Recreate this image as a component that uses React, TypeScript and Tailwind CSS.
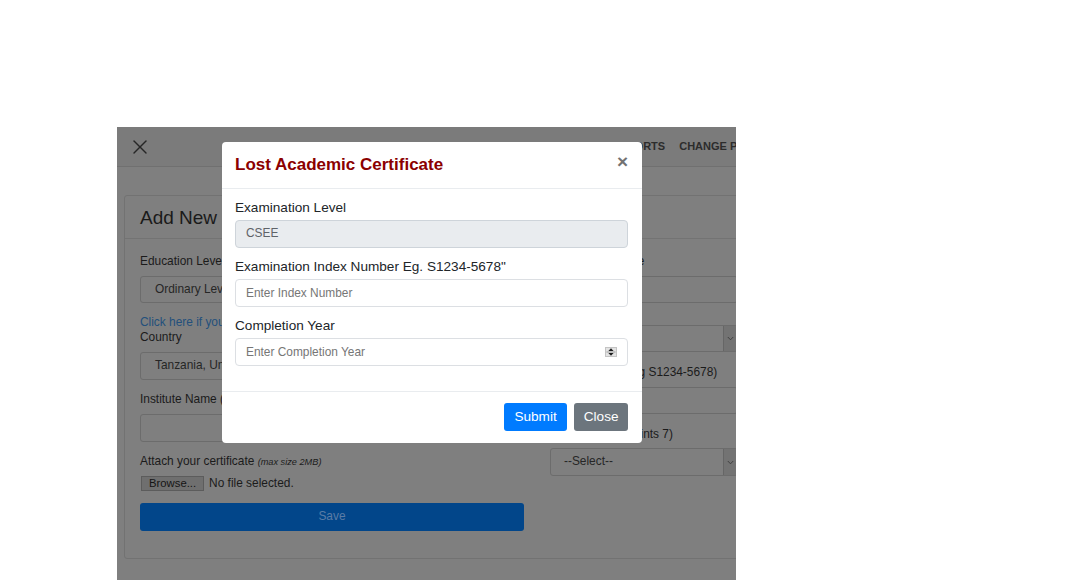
import React from "react";
import { X } from "lucide-react";

const bgLabel = "block leading-[15px] text-[#1b1b1b]";
const bgInput = "border border-[#6c6c6c] rounded-[3px] flex items-center";

function BgSelect({ text, h, className = "" }: { text: string; h: string; className?: string }) {
  return (
    <div className={`${bgInput} ${h} ${className} w-[188px] pl-[13px] justify-between overflow-hidden`}>
      <span className="text-[#262626]">{text}</span>
      <div className="w-[14px] h-full bg-[#737373] border-l border-[#666] flex items-center justify-center shrink-0">
        <svg width="7" height="5" viewBox="0 0 7 5">
          <path d="M0.8 1 L3.5 3.8 L6.2 1" stroke="#3a3a3a" strokeWidth="0.9" fill="none" />
        </svg>
      </div>
    </div>
  );
}

function Spinner() {
  return (
    <svg width="12" height="10" viewBox="0 0 12 10" className="shrink-0">
      <rect x="0" y="0" width="12" height="10" fill="#e3e3e3" />
      <rect x="0.5" y="0.5" width="11" height="9" fill="none" stroke="#c4c4c4" />
      <path d="M6 1.3 L8.6 4 L3.4 4 Z" fill="#1e1e1e" />
      <path d="M1.5 5 L10.5 5" stroke="#8a8a8a" strokeWidth="0.8" />
      <path d="M3.4 6 L8.6 6 L6 8.7 Z" fill="#1e1e1e" />
    </svg>
  );
}

export default function App() {
  return (
    <div className="w-[1080px] h-[580px] bg-white overflow-hidden font-['Liberation_Sans',Arial,sans-serif]">
      <div className="pt-[127px] pl-[117px]">
        <div className="relative w-[619px] h-[453px] overflow-hidden bg-[#7f7f7f] text-[11.9px]">
          {/* top bar */}
          <div className="flex items-center h-[39px] bg-[#7b7b7b] border-b border-[#707070] box-content">
            <div className="pl-[11px] w-[495px] shrink-0">
              <X size={24} strokeWidth={1.4} color="#262626" />
            </div>
            <nav className="flex gap-[14px] shrink-0 whitespace-nowrap text-[11px] font-bold text-[#2c2c2c]">
              <span>REPORTS</span>
              <span>CHANGE PASSWORD</span>
            </nav>
          </div>

          {/* card */}
          <div className="ml-[7px] mt-[28px] w-[820px] border border-[#727272] rounded-[3px]">
            <div className="h-[43px] px-[15px] flex items-center border-b border-[#737373]">
              <h4 className="text-[19px] text-[#1a1a1a] leading-none">Add New Certificate</h4>
            </div>
            <div className="pl-[15px] pt-[15px] pb-[27px] flex gap-[26px]">
              {/* left column */}
              <div className="w-[384px] shrink-0">
                <label className={`${bgLabel} mb-[7px]`}>Education Level</label>
                <div className={`${bgInput} h-[27px] pl-[14px] text-[#262626]`}>Ordinary Level</div>
                <div className="mt-[12px] leading-[15px] text-[#23507c]">Click here if your country is not listed</div>
                <label className={`${bgLabel} mb-[7px]`}>Country</label>
                <div className={`${bgInput} h-[28px] pl-[14px] text-[#262626]`}>Tanzania, United Republic of</div>
                <label className={`${bgLabel} mt-[12px] mb-[7px]`}>Institute Name (Full Name)</label>
                <div className={`${bgInput} h-[28px]`}></div>
                <div className="mt-[12px] h-[15px] leading-[15px] text-[#1b1b1b]">
                  Attach your certificate <i className="text-[9.2px] leading-[10px]">(max size 2MB)</i>
                </div>
                <div className="mt-[7px] flex items-center h-[15px]">
                  <span className="h-[15px] ml-[1px] px-[7px] bg-[#6f6f6f] border border-[#5c5c5c] text-[11.3px] leading-[13px] text-[#151515]">
                    Browse...
                  </span>
                  <span className="ml-[5px] text-[#1b1b1b]">No file selected.</span>
                </div>
                <button className="mt-[12px] h-[28px] w-full rounded-[3px] bg-[#02468a] text-[#5a7ca6] text-[11.9px]">
                  Save
                </button>
              </div>
              {/* right column */}
              <div className="w-[188px] shrink-0">
                <label className={`${bgLabel} mb-[7px] whitespace-nowrap`}>Examination Type</label>
                <div className={`${bgInput} h-[27px]`}></div>
                <BgSelect text="" h="h-[27px]" className="mt-[22px]" />
                <label className={`${bgLabel} mt-[13px] mb-[7px] whitespace-nowrap`}>Index Number (eg S1234-5678)</label>
                <div className={`${bgInput} h-[27px]`}></div>
                <label className={`${bgLabel} mt-[13px] mb-[6px] whitespace-nowrap`}>Division (Total points 7)</label>
                <BgSelect text="--Select--" h="h-[28px]" />
              </div>
            </div>
          </div>

          {/* modal */}
          <div className="absolute left-[105px] top-[15px] w-[420px] bg-white rounded-[4px]">
            <div className="flex items-start justify-between pl-[13px] pr-[14px] pt-[13px] pb-[13px] border-b border-[#e9ecef]">
              <h5 className="text-[17px] leading-[20px] font-bold text-[#8b0000]">Lost Academic Certificate</h5>
              <button className="text-[19px] leading-[20px] font-bold text-[#727272] mt-[-3px]">×</button>
            </div>
            <div className="pl-[13px] pr-[14px] pt-[11px] pb-[25px] text-[13.6px] text-[#212529]">
              <label className="block leading-[15px] mb-[5px]">Examination Level</label>
              <div className="h-[28px] mb-[11px] bg-[#e9ecef] border border-[#ced4da] rounded-[4px] px-[10px] flex items-center text-[11.9px] text-[#5f6368]">
                CSEE
              </div>
              <label className="block leading-[15px] mb-[5px]">Examination Index Number Eg. S1234-5678"</label>
              <input
                className="block w-full h-[28px] mb-[11px] border border-[#dcdfe3] rounded-[4px] px-[10px] text-[11.9px] outline-none placeholder:text-[#767676]"
                placeholder="Enter Index Number"
              />
              <label className="block leading-[15px] mb-[5px]">Completion Year</label>
              <div className="flex items-center h-[28px] border border-[#dcdfe3] rounded-[4px] pl-[10px] pr-[10px]">
                <input
                  className="flex-1 min-w-0 h-full text-[11.9px] outline-none placeholder:text-[#767676]"
                  placeholder="Enter Completion Year"
                />
                <Spinner />
              </div>
            </div>
            <div className="flex justify-end gap-[7px] pl-[13px] pr-[14px] pt-[11px] pb-[12px] border-t border-[#e9ecef]">
              <button className="h-[28px] px-[10.5px] rounded-[3px] bg-[#007bff] text-white text-[13.6px]">Submit</button>
              <button className="h-[28px] px-[9.5px] rounded-[3px] bg-[#6c757d] text-white text-[13.6px]">Close</button>
            </div>
          </div>
        </div>
      </div>
    </div>
  );
}
